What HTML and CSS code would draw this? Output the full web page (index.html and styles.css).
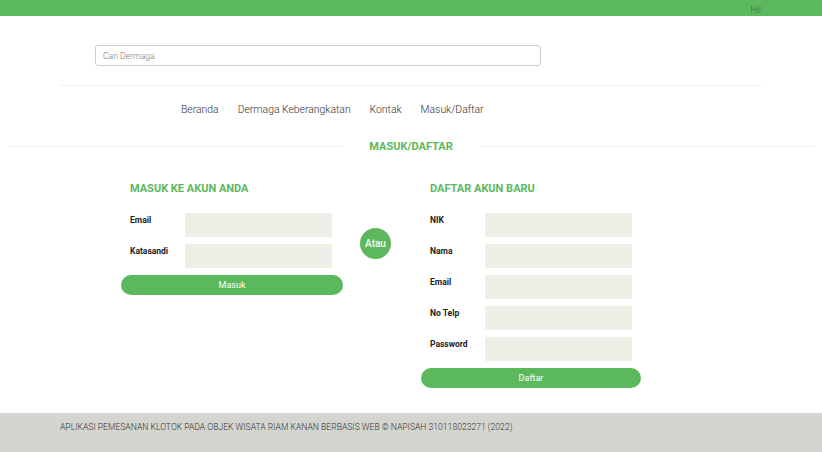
FILE: index.html
```html
<!DOCTYPE html>
<html lang="id">
<head>
  <meta charset="UTF-8" />
  <meta name="viewport" content="width=device-width, initial-scale=1.0">
  <title>Masuk/Daftar - Klotok Riam Kanan</title>
  <link rel="stylesheet" href="styles.css">
</head>
<body>
  <div class="topbar">
    <span class="greeting">Hi!</span>
  </div>
  <header class="container">
    <div class="search-row">
      <input type="text" class="search-input" placeholder="Cari Dermaga">
    </div>
    <nav class="main-nav">
      <a href="#">Beranda</a>
      <a href="#">Dermaga Keberangkatan</a>
      <a href="#">Kontak</a>
      <a href="#">Masuk/Daftar</a>
    </nav>
  </header>
  <div class="section-title">
    <span class="line"></span>
    <h2>MASUK/DAFTAR</h2>
    <span class="line"></span>
  </div>
  <main class="forms">
    <div class="form-col login-col">
      <h3>MASUK KE AKUN ANDA</h3>
      <div class="field"><label>Email</label><input type="text"></div>
      <div class="field"><label>Katasandi</label><input type="password"></div>
      <button class="btn">Masuk</button>
    </div>
    <div class="or-col">
      <span class="or-badge">Atau</span>
    </div>
    <div class="form-col register-col">
      <h3>DAFTAR AKUN BARU</h3>
      <div class="field"><label>NIK</label><input type="text"></div>
      <div class="field"><label>Nama</label><input type="text"></div>
      <div class="field"><label>Email</label><input type="text"></div>
      <div class="field"><label>No Telp</label><input type="text"></div>
      <div class="field"><label>Password</label><input type="password"></div>
      <button class="btn">Daftar</button>
    </div>
  </main>
  <footer>
    <p>APLIKASI PEMESANAN KLOTOK PADA OBJEK WISATA RIAM KANAN BERBASIS WEB &copy; NAPISAH 310118023271 (2022)</p>
  </footer>
</body>
</html>
```

FILE: styles.css
```css
html, body {
  margin: 0;
  padding: 0;
}
body {
  font-family: Roboto, "Liberation Sans", sans-serif;
  background: #fff;
  color: #333;
}
.topbar {
  height: 16px;
  background-color: #5cb85c;
  display: flex;
  justify-content: flex-end;
  align-items: center;
  padding-right: 61px;
}
.greeting {
  font-size: 9px;
  font-weight: 300;
  color: #555;
  margin-top: 4px;
}
.container {
  width: 700px;
  margin: 0 auto;
}
.search-row {
  padding: 29px 0 19px 34px;
  border-bottom: 1px solid #eee;
}
.search-input {
  display: block;
  box-sizing: border-box;
  width: 446px;
  height: 21px;
  border: 1px solid #ccc;
  border-radius: 3px;
  padding: 0 7px;
  font-family: inherit;
  font-size: 8.6px;
  font-weight: 300;
}
.search-input::placeholder {
  color: #777;
}
.main-nav {
  display: flex;
  gap: 19px;
  padding: 17px 0 0 120px;
  height: 30px;
}
.main-nav a {
  font-size: 10.4px;
  font-weight: 300;
  color: #333;
  text-decoration: none;
}
.section-title {
  display: flex;
  align-items: center;
  gap: 27px;
  padding: 0 8px;
  margin-top: 7px;
}
.section-title .line {
  flex: 1;
  border-top: 1px solid #eee;
}
.section-title h2 {
  margin: 0;
  font-size: 11px;
  font-weight: 700;
  color: #5cb85c;
  line-height: 13px;
}
.forms {
  display: flex;
  padding: 29px 0 0 121px;
  height: 231px;
}
.form-col h3 {
  margin: 0 0 18px 9px;
  font-size: 11px;
  font-weight: 700;
  color: #5cb85c;
  line-height: 13px;
}
.login-col {
  width: 222px;
}
.login-col .btn {
  margin-top: 1px;
}
.register-col {
  width: 220px;
}
.field {
  display: flex;
  margin-bottom: 7px;
}
.field label {
  width: 55px;
  padding: 2px 0 0 9px;
  font-size: 8.5px;
  font-weight: 700;
  color: #222;
}
.field input {
  width: 147px;
  height: 24px;
  box-sizing: border-box;
  border: none;
  background: #efeee7;
}
.btn {
  display: block;
  width: 100%;
  height: 20px;
  border: none;
  border-radius: 10px;
  background-color: #5cb85c;
  color: #fff;
  font-family: inherit;
  font-size: 9px;
  cursor: pointer;
}
.or-col {
  width: 78px;
  display: flex;
  padding: 46px 0 0 17px;
  box-sizing: border-box;
}
.or-badge {
  width: 31px;
  height: 31px;
  border-radius: 50%;
  background-color: #5cb85c;
  color: #fff;
  font-size: 10px;
  font-weight: 500;
  display: flex;
  align-items: center;
  justify-content: center;
}
footer {
  background-color: #d5d5d0;
  height: 40px;
  padding: 0 60px;
}
footer p {
  margin: 0;
  padding-top: 9px;
  font-size: 8.6px;
  font-weight: 300;
  color: #333;
}
```
